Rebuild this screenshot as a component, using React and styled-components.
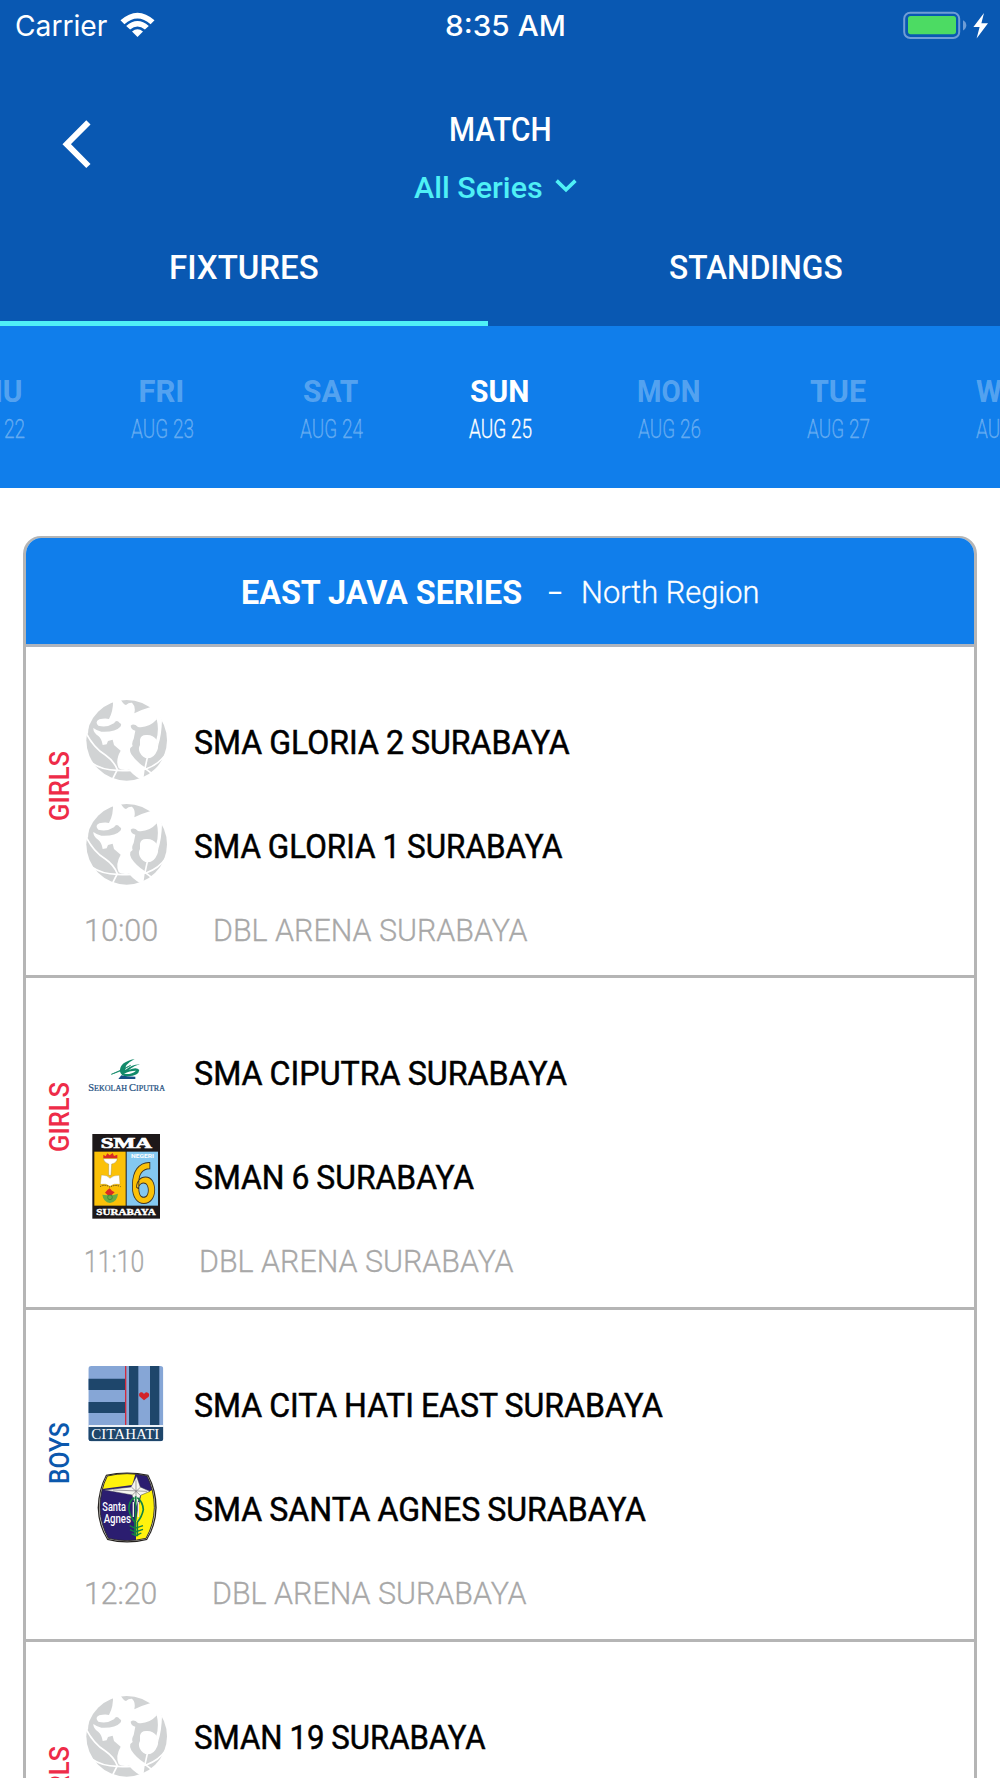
import React, { useLayoutEffect, useRef, useState } from 'react';
import styled, { createGlobalStyle } from 'styled-components';

const COLORS = {
  header: '#0958b2',
  primary: '#107eeb',
  accent: '#4ff0f6',
  girls: '#ee2b48',
  boys: '#0b58ad',
  line: '#b5b5b5',
  muted: '#a8a8a8',
  ball: '#d1d3d4',
};

const DAYS = [
  { day: 'THU', date: 'AUG 22', width: 60 },
  { day: 'FRI', date: 'AUG 23', width: 46 },
  { day: 'SAT', date: 'AUG 24', width: 55 },
  { day: 'SUN', date: 'AUG 25', width: 59, active: true },
  { day: 'MON', date: 'AUG 26', width: 63 },
  { day: 'TUE', date: 'AUG 27', width: 56 },
  { day: 'WED', date: 'AUG 28', width: 62 },
];

const MATCHES = [
  {
    group: 'GIRLS',
    time: '10:00',
    timeWidth: 74,
    teams: [
      { name: 'SMA GLORIA 2 SURABAYA', logo: 'ball', width: 376 },
      { name: 'SMA GLORIA 1 SURABAYA', logo: 'ball', width: 369 },
    ],
  },
  {
    group: 'GIRLS',
    time: '11:10',
    timeWidth: 60,
    teams: [
      { name: 'SMA CIPUTRA SURABAYA', logo: 'ciputra', width: 373 },
      { name: 'SMAN 6 SURABAYA', logo: 'sman6', width: 280 },
    ],
  },
  {
    group: 'BOYS',
    time: '12:20',
    timeWidth: 73,
    teams: [
      { name: 'SMA CITA HATI EAST SURABAYA', logo: 'citahati', width: 469 },
      { name: 'SMA SANTA AGNES SURABAYA', logo: 'agnes', width: 452 },
    ],
  },
  {
    group: 'GIRLS',
    time: '13:30',
    timeWidth: 74,
    teams: [
      { name: 'SMAN 19 SURABAYA', logo: 'ball', width: 292 },
      { name: 'SMAN 5 SURABAYA', logo: 'ball', width: 280 },
    ],
  },
];

// squeezes or stretches a single line of text to the given length
const Fit = ({ size, vertical, children }) => {
  const ref = useRef(null);
  const [scale, setScale] = useState(1);
  useLayoutEffect(() => {
    const el = ref.current;
    setScale(size / (vertical ? el.offsetHeight : el.offsetWidth));
  }, [size, vertical, children]);
  return (
    <FitBox $size={size} $vertical={vertical}>
      <FitText
        ref={ref}
        style={{ transform: vertical ? `scaleY(${scale})` : `scaleX(${scale})` }}
      >
        {children}
      </FitText>
    </FitBox>
  );
};

const BallLogo = () => (
  <Logo viewBox="200 52 244 260">
    <circle cx="322" cy="182" r="121" fill={COLORS.ball} />
    <g fill="#fff">
      <path d="M281 58H303Q312 74 320 76Q328 68 338 69Q350 80 345 101Q366 90 394 82Q410 98 413 119Q388 146 356 142Q343 130 334 138Q335 150 348 153L343 178Q336 190 340 199L333 205Q330 214 336 224Q350 246 377 263L372 300L362 298Q338 284 330 270Q308 274 298 266Q287 242 304 213L284 196L280 180L266 184L262 194L250 196Q247 178 238 170Q221 158 222 145Q234 154 246 156Q288 158 303 141Q309 134 301 130Q292 118 284 131Q262 145 237 138Q225 126 240 119Q258 114 269 118Q283 92 281 58Z" />
      <path d="M392 80Q414 92 428 122Q427 166 416 200L411 180Q420 150 412 118Z" />
      <path d="M362 180Q364 166 380 166Q400 164 412 180Q420 196 414 212Q404 236 386 236Q370 236 361 218Q356 206 362 196Z" />
      <path d="M198 162V100H216Q206 130 206 162Z" />
    </g>
    <g fill="none" stroke="#fff" strokeWidth="5">
      <path d="M199 158Q224 206 258 226Q284 244 294 270L280 298" />
      <path d="M216 249Q248 272 294 272Q340 276 380 268Q420 254 442 220" />
      <path d="M384 234L377 266L406 288" />
    </g>
  </Logo>
);

const CiputraLogo = () => (
  <Logo viewBox="200 -31 244 260">
    <path d="M297 119H348V112Q322 112 306 108Z" fill="#164f86" />
    <path
      d="M346 59Q300 68 302 96Q304 112 326 111Q358 110 360 92Q352 82 328 92Q348 76 362 76Q342 74 318 92Q314 76 346 59Z"
      fill="#128a6a"
    />
    <path d="M276 105Q308 96 334 78Q306 92 276 105Z" fill="#128a6a" stroke="#128a6a" strokeWidth="2" />
    <path d="M314 104Q330 94 350 94Q338 106 314 104Z" fill="#fff" />
    <LogoText x="207" y="156" fill="#24507f" stroke="#24507f" strokeWidth="0.7" fontSize="24" textLength="230" lengthAdjust="spacingAndGlyphs">
      <tspan fontSize="31">S</tspan>EKOLAH <tspan fontSize="31">C</tspan>IPUTRA
    </LogoText>
  </Logo>
);

const Sman6Logo = () => (
  <Logo viewBox="200 277 244 260">
    <rect x="219" y="280" width="203" height="254" fill="#1d1819" />
    <rect x="225" y="333" width="94" height="162" fill="#fbc108" />
    <rect x="322" y="333" width="94" height="162" fill="#84c8f0" />
    <LogoText x="244" y="321" fill="#fff" stroke="#fff" strokeWidth="2" fontSize="42" fontWeight="700" textLength="154" lengthAdjust="spacingAndGlyphs">SMA</LogoText>
    <LogoText x="231" y="524" fill="#fff" stroke="#fff" fontSize="24" fontWeight="700" textLength="178" lengthAdjust="spacingAndGlyphs">SURABAYA</LogoText>
    <LogoText x="335" y="351" $sans fill="#fff" fontSize="17" fontWeight="700" textLength="69" lengthAdjust="spacingAndGlyphs">NEGERI</LogoText>
    <LogoText x="333" y="486" $sans fill="#fbc108" stroke="#3c3328" strokeWidth="3" fontSize="164" fontWeight="700" textLength="78" lengthAdjust="spacingAndGlyphs">6</LogoText>
    <path d="M252 353V342L259 347L264 338L271 344L280 337L284 346L294 342V353Z" fill="#d92a24" />
    <path d="M252 354H294Q292 367 277 370L275 404H268V370Q254 366 252 354Z" fill="#fff" stroke="#8c7622" strokeWidth="1" />
    <path d="M246 403Q264 403 272 413Q282 403 300 404L302 431Q284 427 272 437Q260 427 243 431Z" fill="#fff" stroke="#a7882a" />
    <path d="M242 438Q258 429 272 440Q286 430 304 438" fill="none" stroke="#54451f" strokeWidth="3" strokeDasharray="4 3" />
    <path d="M249 462L263 464L271 452L280 464L296 459Q294 484 272 487Q252 484 249 462Z" fill="#68ad45" />
    <path d="M257 456L264 448L271 443L278 450L286 455L277 463H265Z" fill="#d92a24" />
    <circle cx="272" cy="470" r="7" fill="none" stroke="#2e7a35" strokeWidth="2" />
  </Logo>
);

const CitaHatiLogo = () => (
  <Logo viewBox="200 63 244 260">
    <defs>
      <clipPath id="cita">
        <rect x="207" y="78" width="225" height="226" rx="9" />
      </clipPath>
    </defs>
    <g clipPath="url(#cita)">
      <rect x="207" y="78" width="225" height="226" fill="#86a6d6" />
      <path d="M207 116H317V150H207ZM207 186H317V219H207ZM329 78H357V256H329ZM392 78H420V256H392Z" fill="#1e466b" />
      <rect x="317" y="78" width="4" height="178" fill="#cf2a3c" />
      <rect x="207" y="255" width="225" height="6" fill="#eef3f8" />
      <rect x="207" y="261" width="225" height="43" fill="#1e466b" />
      <path d="M374 181L360 169Q357 160 364 157Q371 155 374 162Q378 155 386 158Q392 162 388 170Z" fill="#d2232a" />
    </g>
    <LogoText x="216" y="297" fill="#fff" fontSize="43" textLength="204" lengthAdjust="spacingAndGlyphs">CITAHATI</LogoText>
  </Logo>
);

const AgnesLogo = () => (
  <Logo viewBox="199 374 244 260">
    <defs>
      <clipPath id="agnes">
        <path d="M263 407Q322 393 382 407Q404 450 404 502Q403 552 379 594Q322 608 266 594Q242 550 241 502Q241 450 263 407Z" />
      </clipPath>
    </defs>
    <path d="M259 403Q322 390 386 403Q411 450 411 502Q410 556 382 599Q322 614 263 599Q235 556 234 502Q235 450 259 403Z" fill="#25221f" />
    <path d="M261 406Q322 393 384 406Q407 450 407 502Q407 553 380 596Q322 610 265 596Q238 553 238 502Q238 450 261 406Z" fill="#deded8" />
    <g clipPath="url(#agnes)">
      <rect x="234" y="390" width="177" height="220" fill="#2b1d70" />
      <path d="M240 447L268 390H350L338 434Z" fill="#fff20d" />
      <path d="M365 460L392 452L415 440V610H349V540Z" fill="#fff20d" />
      <path d="M254 449L334 440L351 408L362 440L391 453L363 465L349 500L337 464Z" fill="#f5f5ef" stroke="#3b3850" strokeWidth="1.5" />
      <path d="M349 420V486M280 449L382 453M335 440L363 466M364 439L336 466" stroke="#77747a" strokeWidth="2" />
    </g>
    <path d="M263 407Q322 393 382 407Q404 450 404 502Q403 552 379 594Q322 608 266 594Q242 550 241 502Q241 450 263 407Z" fill="none" stroke="#25221f" strokeWidth="2.5" />
    <g fill="none" stroke="#118342" strokeWidth="5">
      <path d="M344 472Q326 484 328 508Q331 529 346 546V586M353 472Q370 486 371 508Q367 529 353 546V588M348 468V542" />
      <path d="M330 556L346 564L370 556M331 568L347 575L370 567M336 580L349 586L365 578" strokeWidth="4" />
    </g>
    <path d="M341 485V530M356 485V530" stroke="#ebebe4" strokeWidth="4" />
    <LogoText x="248" y="512" $sans fill="#fff" fontSize="36" fontWeight="500" textLength="71" lengthAdjust="spacingAndGlyphs">Santa</LogoText>
    <LogoText x="252" y="548" $sans fill="#fff" fontSize="36" fontWeight="500" textLength="82" lengthAdjust="spacingAndGlyphs">Agnes</LogoText>
  </Logo>
);

const LOGOS = {
  ball: BallLogo,
  ciputra: CiputraLogo,
  sman6: Sman6Logo,
  citahati: CitaHatiLogo,
  agnes: AgnesLogo,
};

const WifiIcon = () => (
  <svg width="35" height="26" viewBox="0 0 35 26" fill="#fff">
    <path d="M0.5 8.3Q17.5 -7 34.5 8.3L30.6 12.2Q17.5 0.6 4.4 12.2Z" />
    <path d="M6.2 14Q17.5 3.8 28.8 14L24.9 17.6Q17.5 11.2 10.1 17.6Z" />
    <path d="M12 19.6Q17.5 14.8 23 19.6L17.5 25Z" />
  </svg>
);

const Battery = () => (
  <svg width="86" height="30" viewBox="902 9 86 30">
    <rect x="904.2" y="11.7" width="55" height="25.3" rx="6" fill="none" stroke="#6f9dd6" strokeWidth="2" />
    <rect x="908" y="15" width="48" height="18.2" rx="2.6" fill="#4cdb63" />
    <path d="M963 19.3Q966.3 21 966.3 24.3Q966.3 27.8 963 29.4Z" fill="#6f9dd6" />
    <path d="M984 12L973.4 26H979.6L976.6 37.4L988 22.2H981.4Z" fill="#fff" />
  </svg>
);

const Match = ({ match }) => (
  <MatchRow>
    <Group $boys={match.group === 'BOYS'}>
      <Fit vertical size={match.group === 'BOYS' ? 62 : 70}>
        {match.group}
      </Fit>
    </Group>
    <div>
      {match.teams.map((team) => {
        const TeamLogo = LOGOS[team.logo];
        return (
          <Team key={team.name}>
            <TeamLogo />
            <TeamName>
              <Fit size={team.width}>{team.name}</Fit>
            </TeamName>
          </Team>
        );
      })}
      <Info>
        <Fit size={match.timeWidth}>{match.time}</Fit>
        <Fit size={314}>DBL ARENA SURABAYA</Fit>
      </Info>
    </div>
  </MatchRow>
);

const App = () => (
  <Screen>
    <GlobalStyle />
    <Header>
      <StatusBar>
        <Carrier>
          <Fit size={92}>Carrier</Fit>
          <WifiIcon />
        </Carrier>
        <Clock>
          <Fit size={121}>8:35 AM</Fit>
        </Clock>
        <Power>
          <Battery />
        </Power>
      </StatusBar>
      <NavBar>
        <BackButton>
          <svg width="30" height="50" viewBox="0 0 30 50" fill="none" stroke="#fff" strokeWidth="6">
            <path d="M26.4 3.4L4.7 25.2L26.4 47" />
          </svg>
        </BackButton>
        <Titles>
          <Title>
            <Fit size={103}>MATCH</Fit>
          </Title>
          <SeriesPicker>
            <Fit size={129}>All Series</Fit>
            <svg width="22" height="14" viewBox="0 0 22 14" fill="none" stroke={COLORS.accent} strokeWidth="3.6">
              <path d="M1.6 1.6L11 10.8L20.4 1.6" />
            </svg>
          </SeriesPicker>
        </Titles>
      </NavBar>
      <Tabs>
        <Tab $active>
          <Fit size={150}>FIXTURES</Fit>
        </Tab>
        <Tab>
          <Fit size={174}>STANDINGS</Fit>
        </Tab>
      </Tabs>
    </Header>
    <DayStrip>
      {DAYS.map((d) => (
        <Day key={d.day} $active={d.active}>
          <DayName>
            <Fit size={d.width}>{d.day}</Fit>
          </DayName>
          <DayDate>
            <Fit size={63}>{d.date}</Fit>
          </DayDate>
        </Day>
      ))}
    </DayStrip>
    <Card>
      <CardHeader>
        <SeriesName>
          <Fit size={281}>EAST JAVA SERIES</Fit>
        </SeriesName>
        <Dash>
          <Fit size={16}>–</Fit>
        </Dash>
        <Region>
          <Fit size={178}>North Region</Fit>
        </Region>
      </CardHeader>
      {MATCHES.map((match) => (
        <Match key={match.time} match={match} />
      ))}
    </Card>
  </Screen>
);

const GlobalStyle = createGlobalStyle`
  * {
    box-sizing: border-box;
  }
  body {
    margin: 0;
    background: #fff;
    font-family: Roboto, 'Liberation Sans', sans-serif;
  }
  svg {
    display: block;
    flex-shrink: 0;
  }
`;

const FitBox = styled.span`
  display: block;
  flex-shrink: 0;
  white-space: nowrap;
  ${({ $vertical, $size }) => ($vertical ? `height: ${$size}px;` : `width: ${$size}px;`)}
`;

const FitText = styled.span`
  display: inline-block;
  transform-origin: 0 0;
`;

const Screen = styled.div`
  width: 1000px;
  height: 1778px;
  overflow: hidden;
`;

const Header = styled.header`
  display: flex;
  flex-direction: column;
  height: 326px;
  color: #fff;
  background: ${COLORS.header};
`;

const StatusBar = styled.div`
  display: grid;
  grid-template-columns: 1fr auto 1fr;
  align-items: center;
  height: 50px;
  padding: 0 12px 0 15px;
  font-family: Inter, 'Liberation Sans', sans-serif;
  font-size: 28.5px;
`;

const Carrier = styled.div`
  display: flex;
  align-items: center;
  gap: 13px;
`;

const Clock = styled.div`
  padding-left: 8px;
  font-weight: 500;
`;

const Power = styled.div`
  display: flex;
  justify-content: flex-end;
`;

const NavBar = styled.div`
  display: grid;
  grid-template-columns: 200px 600px 200px;
  height: 164px;
`;

const BackButton = styled.div`
  padding: 69px 0 0 62px;
`;

const Titles = styled.div`
  display: flex;
  flex-direction: column;
  align-items: center;
  gap: 20px;
  padding-top: 60px;
`;

const Title = styled.div`
  padding-left: 1px;
  font-size: 33px;
  font-weight: 500;
  line-height: 40px;
`;

const SeriesPicker = styled.div`
  display: flex;
  align-items: center;
  gap: 12px;
  margin-right: 10px;
  color: ${COLORS.accent};
  font-size: 30px;
  font-weight: 500;
  line-height: 36px;

  svg {
    margin-bottom: 5px;
  }
`;

const Tabs = styled.div`
  display: flex;
  justify-content: space-between;
  height: 112px;
`;

const Tab = styled.div`
  display: flex;
  justify-content: center;
  width: 488px;
  padding-top: 34px;
  border-bottom: 5px solid ${({ $active }) => ($active ? COLORS.accent : 'transparent')};
  font-size: 33px;
  font-weight: 500;
  line-height: 40px;
`;

const DayStrip = styled.div`
  display: flex;
  justify-content: center;
  height: 162px;
  overflow: hidden;
  background: ${COLORS.primary};
`;

const Day = styled.div`
  display: flex;
  flex-direction: column;
  flex-shrink: 0;
  align-items: center;
  width: 169px;
  padding-top: 48px;
  color: ${({ $active }) => ($active ? '#fff' : 'rgba(255, 255, 255, 0.3)')};
`;

const DayName = styled.div`
  margin-right: 1px;
  font-size: 31px;
  font-weight: 700;
  line-height: 36px;
`;

const DayDate = styled.div`
  margin-top: 4px;
  font-size: 26px;
  font-weight: 300;
  line-height: 30px;
  -webkit-text-stroke: 0.3px;
`;

const Card = styled.section`
  width: 954px;
  margin: 48px auto 0;
  border: 3px solid ${COLORS.line};
  border-top-width: 2px;
  border-radius: 18px 18px 0 0;
  overflow: hidden;
`;

const CardHeader = styled.div`
  display: flex;
  align-items: center;
  justify-content: center;
  height: 108.5px;
  padding-top: 4px;
  border-bottom: 3px solid #aeb4be;
  color: #fff;
  background: ${COLORS.primary};
`;

const SeriesName = styled.div`
  font-size: 33px;
  font-weight: 700;
`;

const Dash = styled.div`
  margin: 0 18px 0 25px;
  padding-top: 2px;
  font-size: 31px;
`;

const Region = styled.div`
  font-size: 31px;
  font-weight: 300;
  -webkit-text-stroke: 0.3px;
`;

const MatchRow = styled.article`
  display: grid;
  grid-template-columns: 60px 1fr;
  height: 331.8px;
  padding-top: 42px;
  border-bottom: 3px solid ${COLORS.line};
`;

const Group = styled.div`
  display: flex;
  justify-content: flex-start;
  width: 36px;
  height: 132px;
  margin-left: 16px;
  writing-mode: vertical-rl;
  transform: rotate(180deg);
  color: ${({ $boys }) => ($boys ? COLORS.boys : COLORS.girls)};
  font-size: 27px;
  font-weight: 500;
  line-height: 36px;
`;

const Team = styled.div`
  display: flex;
  align-items: center;
  height: 104px;
`;

const TeamName = styled.div`
  padding: 3px 0 0 26.5px;
  color: #000;
  font-size: 33px;
  font-weight: 400;
  word-spacing: -1px;
  -webkit-text-stroke: 0.5px #000;
`;

const Info = styled.div`
  display: flex;
  gap: 55.5px;
  margin: 16px 0 0 -2.5px;
  color: ${COLORS.muted};
  font-size: 31px;
  font-weight: 300;
  line-height: 36px;
  -webkit-text-stroke: 0.3px;
`;

const Logo = styled.svg`
  width: 81.33px;
  height: 86.67px;
`;

const LogoText = styled.text`
  font-family: ${({ $sans }) => ($sans ? "Roboto, sans-serif" : "'Liberation Serif', serif")};
`;

export default App;
